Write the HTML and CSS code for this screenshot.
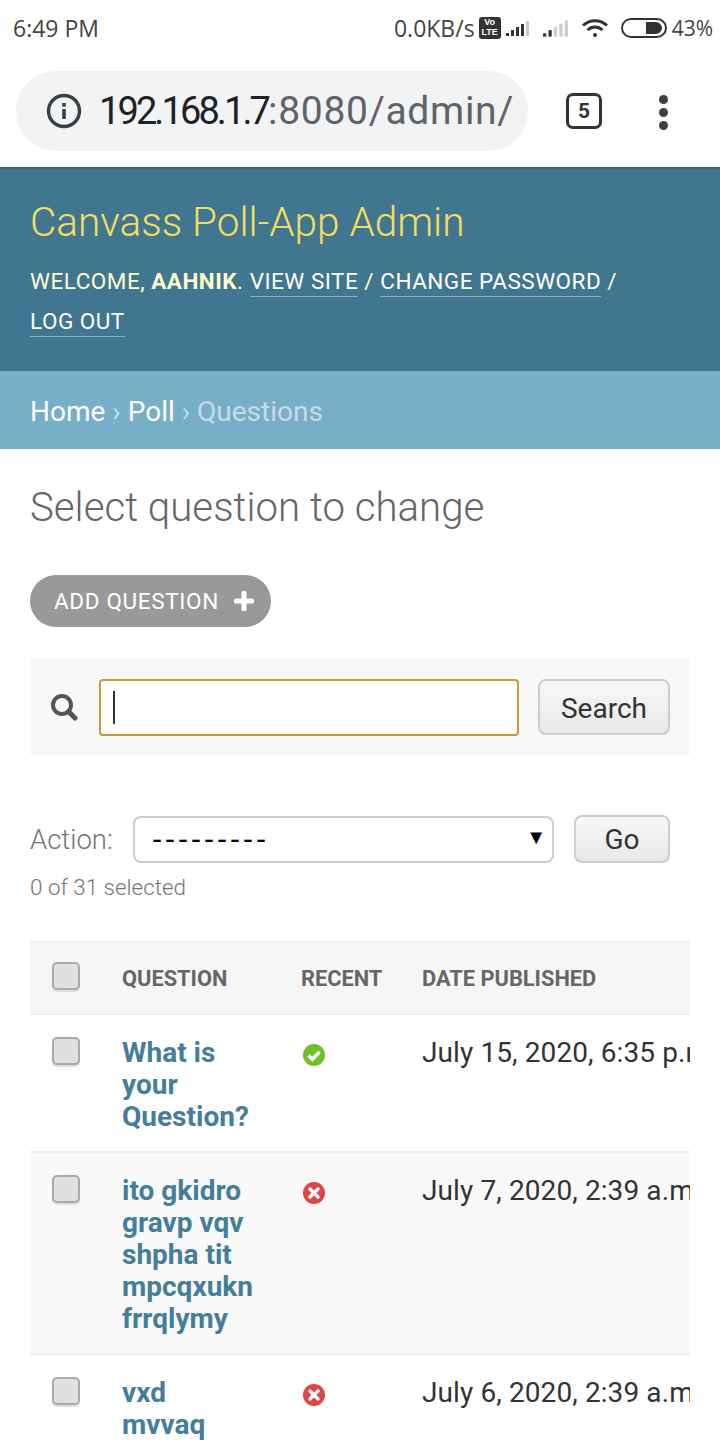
FILE: index.html
```html
<!DOCTYPE html>
<html lang="en">
<head>
<meta charset="UTF-8">
<title>Select question to change</title>
<link rel="stylesheet" href="styles.css">
</head>
<body>
<div class="statusbar">
    <span class="time">6:49 PM</span>
    <div class="status-right">
        <span class="speed">0.0KB/s</span>
        <span class="volte">Vo<br>LTE</span>
        <svg width="25" height="15" viewBox="0 0 25 15"><rect x="1" y="12" width="3" height="3" fill="#333"/><rect x="6" y="9" width="3" height="6" fill="#333"/><rect x="11" y="6" width="3" height="9" fill="#333"/><rect x="16" y="3" width="3" height="12" fill="#333"/><rect x="21" y="0" width="3" height="15" fill="#ccc"/></svg>
        <svg class="sig2" width="27" height="17" viewBox="0 0 25 15"><rect x="1" y="12" width="3" height="3" fill="#333"/><rect x="6" y="9" width="3" height="6" fill="#333"/><rect x="11" y="6" width="3" height="9" fill="#ccc"/><rect x="16" y="3" width="3" height="12" fill="#ccc"/><rect x="21" y="0" width="3" height="15" fill="#ccc"/></svg>
        <svg class="wifi" width="28" height="20" viewBox="0 0 28 20" fill="none" stroke="#333" stroke-width="3"><path d="M2 7.5C9 1 19 1 26 7.5"/><path d="M6.5 12C11 8 17 8 21.5 12"/><circle cx="14" cy="17" r="2" fill="#333" stroke="none"/></svg>
        <svg class="battery" width="46" height="20" viewBox="0 0 46 20"><rect x="1" y="1" width="44" height="18" rx="9" fill="none" stroke="#333" stroke-width="2"/><path d="M25 4H34C38 4 41 7 41 10C41 13 38 16 34 16H25Z" fill="#333"/></svg>
        <span class="pct">43%</span>
    </div>
</div>
<div class="chrome">
    <div class="urlbar">
        <svg class="info" width="36" height="36" viewBox="0 0 36 36"><circle cx="18" cy="18" r="15.5" fill="none" stroke="#3c4043" stroke-width="3.4"/><rect x="16.2" y="16" width="3.6" height="10" fill="#3c4043"/><rect x="16.2" y="10" width="3.6" height="3.6" fill="#3c4043"/></svg>
        <span class="url"><b>192.168.1.7</b>:8080/admin/</span>
    </div>
    <span class="tabs">5</span>
    <span class="dots"><i></i><i></i><i></i></span>
</div>
<div class="header">
    <h1>Canvass Poll-App Admin</h1>
    <div class="usertools">WELCOME, <strong>AAHNIK</strong>. <a>VIEW SITE</a> / <a>CHANGE PASSWORD</a> / <a>LOG OUT</a></div>
</div>
<div class="breadcrumbs"><a>Home</a> › <a>Poll</a> › Questions</div>
<div class="content">
    <h2>Select question to change</h2>
    <a class="addlink">ADD QUESTION
        <svg width="20" height="20" viewBox="0 0 20 20"><path d="M7.5 1.5Q7.5 0 9 0H11Q12.5 0 12.5 1.5V7.5H18.5Q20 7.5 20 9V11Q20 12.5 18.5 12.5H12.5V18.5Q12.5 20 11 20H9Q7.5 20 7.5 18.5V12.5H1.500Q0 12.5 0 11V9Q0 7.500 1.500 7.500H7.500Z" fill="#fff"/></svg>
    </a>
    <div class="toolbar">
        <svg width="28" height="28" viewBox="0 0 28 28" fill="none"><circle cx="12" cy="12" r="9" stroke="#555" stroke-width="4"/><path d="M18.500 18.500L25 25" stroke="#555" stroke-width="5" stroke-linecap="round"/></svg>
        <div class="searchbox"><span class="caret"></span></div>
        <span class="btn search-btn">Search</span>
    </div>
    <div class="actions">
        <span class="action-label">Action:</span>
        <div class="selectbox"><span>---------</span><span class="arrow">▼</span></div>
        <span class="btn go-btn">Go</span>
    </div>
    <div class="counter">0 of 31 selected</div>
    <div class="results">
        <table>
            <thead>
                <tr>
                    <th class="c-check"><span class="check"></span></th>
                    <th class="c-question">QUESTION</th>
                    <th class="c-recent">RECENT</th>
                    <th class="c-date">DATE PUBLISHED</th>
                </tr>
            </thead>
            <tbody>
                <tr>
                    <td class="c-check"><span class="check"></span></td>
                    <td class="c-question"><a>What is your Question?</a></td>
                    <td class="c-recent">
                        <svg width="24" height="24" viewBox="0 0 24 24"><circle cx="12" cy="12" r="11" fill="#70bf2b"/><path d="M6.500 12.500L10.300 16.300L17.500 9" fill="none" stroke="#fff" stroke-width="3.400"/></svg>
                    </td>
                    <td class="c-date">July 15, 2020, 6:35 p.m.</td>
                </tr>
                <tr class="alt">
                    <td class="c-check"><span class="check"></span></td>
                    <td class="c-question"><a>ito gkidro gravp vqv shpha tit mpcqxukn frrqlymy</a></td>
                    <td class="c-recent">
                        <svg width="24" height="24" viewBox="0 0 24 24"><circle cx="12" cy="12" r="11" fill="#dd4646"/><path d="M8 8L16 16M16 8L8 16" fill="none" stroke="#fff" stroke-width="3.400" stroke-linecap="round"/></svg>
                    </td>
                    <td class="c-date">July 7, 2020, 2:39 a.m.</td>
                </tr>
                <tr>
                    <td class="c-check"><span class="check"></span></td>
                    <td class="c-question"><a>vxd mvvaq</a></td>
                    <td class="c-recent">
                        <svg width="24" height="24" viewBox="0 0 24 24"><circle cx="12" cy="12" r="11" fill="#dd4646"/><path d="M8 8L16 16M16 8L8 16" fill="none" stroke="#fff" stroke-width="3.400" stroke-linecap="round"/></svg>
                    </td>
                    <td class="c-date">July 6, 2020, 2:39 a.m.</td>
                </tr>
            </tbody>
        </table>
    </div>
</div>
</body>
</html>
```
FILE: styles.css
```css
html, body {margin: 0; padding: 0; background: #fff;}
body {width: 720px; height: 1440px; overflow: hidden; font-family: Roboto, "Liberation Sans", sans-serif; color: #333;}
a {text-decoration: none;}

.statusbar {height: 56px; box-sizing: border-box; padding: 0 7px 0 13px; display: flex; justify-content: space-between; align-items: center; font-family: "Open Sans", sans-serif; font-size: 23px; color: #444;}
.status-right {display: flex; align-items: center;}
.volte {width: 22px; height: 22px; margin: 0 4px 0 4px; background: #333; color: #fff; border-radius: 3px; font: bold 9px/10px "Liberation Sans", sans-serif; text-align: center;}
.sig2 {margin-left: 12px;}
.wifi {margin-left: 12px;}
.battery {margin: 0 5px 0 12px;}
.pct {font-size: 21px;}

.chrome {height: 111px; box-sizing: border-box; padding: 15px 0 0 16px; display: flex; align-items: flex-start;}
.urlbar {width: 512px; height: 80px; box-sizing: border-box; padding-left: 30px; border-radius: 40px; background: #f1f3f4; display: flex; align-items: center; overflow: hidden;}
.info {flex: none;}
.url {margin-left: 17px; font-size: 39px; color: #5f6368; white-space: nowrap; letter-spacing: 0.700px;}
.url b {font-size: 38px; font-weight: 400; color: #202124; letter-spacing: -2.900px;}
.tabs {width: 36px; height: 36px; margin: 22px 0 0 38px; box-sizing: border-box; border: 3px solid #333; border-radius: 7px; font-size: 21px; font-weight: 700; line-height: 30px; text-align: center;}
.dots {margin: 24px 0 0 57px; display: flex; flex-direction: column; gap: 4px;}
.dots i {display: block; width: 9px; height: 9px; border-radius: 50%; background: #3c4043;}

.header {height: 204px; box-sizing: border-box; padding: 32px 30px 0; background: #417690; box-shadow: inset 0 3px 3px -2px rgba(0,0,0,0.3);}
.header h1 {margin: 0; font-size: 40.500px; line-height: 46px; font-weight: 300; color: #f5dd5d;}
.usertools {margin-top: 16px; font-size: 22.500px; line-height: 40px; letter-spacing: 0.500px; color: #ffc;}
.usertools strong {font-weight: 700;}
.usertools a {color: #fff; border-bottom: 1px solid rgba(255,255,255,0.4); padding-bottom: 2px; white-space: nowrap;}

.breadcrumbs {height: 78px; box-sizing: border-box; padding: 0 30px; background: #79aec8; color: #c4dce8; font-size: 28px; line-height: 82px;}
.breadcrumbs a {color: #fff;}

.content {padding: 0 30px;}
.content h2 {margin: 0; padding-top: 36px; font-size: 40.200px; line-height: 46px; font-weight: 300; color: #666;}
.addlink {display: inline-flex; align-items: center; gap: 15px; height: 52px; margin-top: 44px; padding: 0 17px 0 24px; border-radius: 26px; background: #999; color: #fff; font-size: 22.500px; letter-spacing: 0.650px;}
.toolbar {height: 96px; margin-top: 32px; box-sizing: border-box; padding: 0 20px; background: #f8f8f8; display: flex; align-items: center;}
.searchbox {width: 420px; height: 57px; margin-left: 21px; box-sizing: border-box; border: 2px solid #cc9a30; border-radius: 4px; background: #fff; display: flex; align-items: center; padding-left: 12px;}
.caret {width: 2px; height: 33px; background: #333;}
.btn {box-sizing: border-box; border: 2px solid #ccc; border-radius: 8px; background: linear-gradient(#f8f8f8, #e8e8e8); font-size: 28px; color: #333; text-align: center;}
.search-btn {width: 132px; height: 56px; margin-left: 19px; line-height: 56px;}
.actions {margin-top: 60px; display: flex; align-items: center; height: 48px;}
.action-label {width: 103px; font-size: 27.500px; font-weight: 300; color: #777;}
.selectbox {width: 421px; height: 47px; box-sizing: border-box; border: 2px solid #ccc; border-radius: 8px; display: flex; justify-content: space-between; padding: 0 9px 0 17px; align-items: center; font-family: "Liberation Sans", sans-serif; font-size: 30px; letter-spacing: 3px; color: #000;}
.arrow {font-size: 20px; letter-spacing: 0; margin: -3px -3px 0 0;}
.go-btn {width: 96px; height: 48px; margin-left: 20px; line-height: 46px;}
.counter {margin-top: 11px; font-size: 22.400px; font-weight: 300; line-height: 26px; color: #777;}

.results {width: 660px; margin-top: 41px; overflow: hidden;}
table {border-collapse: collapse; width: 720px; table-layout: fixed;}
th {height: 70px; padding: 0; background: #f6f6f6; border-top: 2px solid #eee; border-bottom: 2px solid #eee; font-size: 21.800px; font-weight: 700; color: #666; text-align: left;}
th .check {margin-bottom: 5px;}
td {padding: 0; vertical-align: top; border-bottom: 2px solid #eee;}
tr.alt td {background: #f9f9f9;}
.c-check {width: 92px;}
.c-question {width: 179px;}
.c-recent {width: 121px;}
td.c-check {padding-top: 22px;}
td.c-question {padding: 22px 48px 18px 0;}
td.c-recent {padding: 28px 0 0 1px;}
td.c-date {padding-top: 20px; font-size: 28px; font-weight: 400; letter-spacing: 0.100px; line-height: 36px; white-space: nowrap; color: #333;}
td.c-question a {display: block; font-size: 28px; line-height: 32px; font-weight: 700; color: #447e9b;}
.check {display: block; width: 28px; height: 28px; margin-left: 22px; box-sizing: border-box; border: 2px solid #aaa; border-radius: 5px; background: #e0e0e0; box-shadow: 0 2px 1px #ddd;}
```
